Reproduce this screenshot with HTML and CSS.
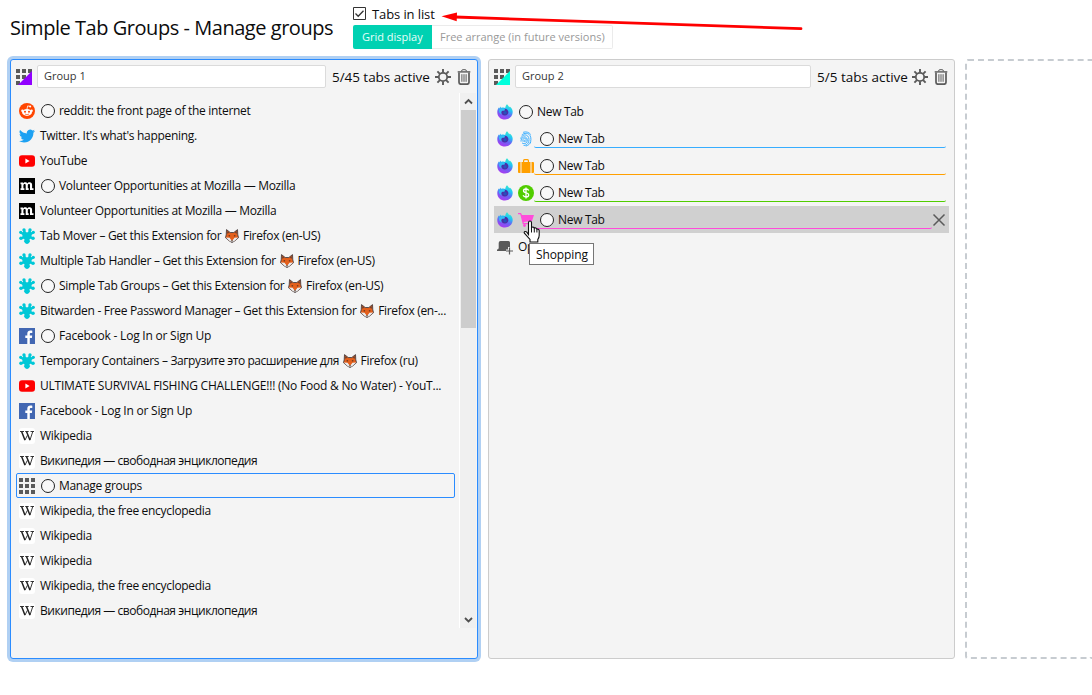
FILE: index.html
```html
<!DOCTYPE html>
<html lang="en">
<head>
<meta charset="utf-8">
<title>Simple Tab Groups - Manage groups</title>
<link rel="stylesheet" href="styles.css">
</head>
<body>
<svg class="sprite" width="0" height="0">
  <defs>
    <linearGradient id="ff-body" x1="0.8" y1="0" x2="0.4" y2="1"><stop offset="0" stop-color="#3ff0c8"/><stop offset=".35" stop-color="#20c5f5"/><stop offset=".65" stop-color="#6a62f5"/><stop offset="1" stop-color="#a83cf0"/></linearGradient>
    <symbol id="reddit" viewBox="0 0 16 16"><circle cx="8" cy="8" r="8" fill="#ff4500"/><ellipse cx="8" cy="9.4" rx="4.9" ry="3.5" fill="#fff"/><circle cx="3.4" cy="7.8" r="1.2" fill="#fff"/><circle cx="12.6" cy="7.8" r="1.2" fill="#fff"/><path d="M8 6l.7-3.1 2.3.5" fill="none" stroke="#fff" stroke-width=".8"/><circle cx="11.2" cy="3.5" r="1" fill="#fff"/><circle cx="6" cy="8.7" r="1" fill="#ff4500"/><circle cx="10" cy="8.7" r="1" fill="#ff4500"/><path d="M5.9 11q2.1 1.5 4.2 0" fill="none" stroke="#ff4500" stroke-width=".7"/></symbol>
    <symbol id="twitter" viewBox="0 0 24 24"><path fill="#1da1f2" d="M23.95 4.57a10 10 0 01-2.82.77 4.96 4.96 0 002.16-2.72c-.95.55-2 .95-3.13 1.18a4.92 4.92 0 00-8.38 4.48C7.69 8.1 4.07 6.13 1.64 3.16a4.82 4.82 0 001.52 6.57 4.9 4.9 0 01-2.23-.61v.06a4.92 4.92 0 003.95 4.83 4.99 4.99 0 01-2.21.08 4.94 4.94 0 004.6 3.42A9.87 9.87 0 010 19.54a13.99 13.99 0 007.56 2.21c9.05 0 14-7.5 14-13.98 0-.21 0-.42-.02-.63a9.94 9.94 0 002.46-2.55z"/></symbol>
    <symbol id="youtube" viewBox="0 0 16 16"><rect y="2.3" width="16" height="11.4" rx="3" fill="#f00"/><path d="M6.4 5.6v4.8L10.6 8z" fill="#fff"/></symbol>
    <symbol id="mozilla" viewBox="0 0 16 16"><path d="M0 0h16v16H0z"/><path fill="#fff" d="M1.5 4.5H4v1.1c.5-.8 1.2-1.3 2.2-1.3s1.800.4 2.1 1.300c.5-.8 1.200-1.300 2.300-1.300 1.700 0 2.500 1 2.500 2.700v3.300h1.400V12H11V7.500c0-.9-.3-1.400-1-1.400-.8 0-1.200.6-1.200 1.500v2.700h.9V12H6.700V7.500c0-.9-.3-1.400-1-1.400-.8 0-1.300.6-1.300 1.500v2.700h1V12H1.500v-1.700h.9V6.200h-.9z"/></symbol>
    <symbol id="addon" viewBox="0 0 16 16"><g fill="#00c8d7"><circle cx="5" cy="2" r="1.700"/><circle cx="11" cy="2" r="1.700"/><circle cx="1.700" cy="4.300" r="1.600"/><circle cx="14.300" cy="4.300" r="1.600"/><circle cx="1.900" cy="10.300" r="1.700"/><circle cx="14.100" cy="10.300" r="1.700"/><path d="M4.500 2.500h1.800L7 4.200h2l.7-1.700h1.800l.6 1.800 2.100-.6.300 1.900-1.900 1.300v1.500l1.700 1.200-.8 1.900-2.400-.8-.8 1.300.9 1.100-1.200 1.800h-4L4.800 13.100l.9-1.100-.8-1.300-2.400.8-.8-1.900 1.700-1.200V6.900L1.500 5.600l.3-1.900 2.100.6z"/><circle cx="8" cy="14" r="2"/></g></symbol>
    <symbol id="facebook" viewBox="0 0 16 16"><path fill="#4267b2" d="M0 0h16v16H0z"/><path fill="#fff" d="M8.300 16V9.900H6.300V7.500h2V5.800c0-2.100 1.300-3.200 3.100-3.200.9 0 1.600.1 1.900.1v2.200H12c-1 0-1.200.5-1.200 1.200v1.400h2.400l-.3 2.400h-2.100V16z"/></symbol>
    <symbol id="grid" viewBox="0 0 16 16"><path fill="#5a5a5a" d="M0 0h4v4H0zM6 0h4v4H6zM12 0h4v4h-4zM0 6h4v4H0zM6 6h4v4H6zM12 6h4v4h-4zM0 12h4v4H0zM6 12h4v4H6zM12 12h4v4h-4z"/></symbol>
    <symbol id="wikipedia" viewBox="0 0 16 16"><rect width="16" height="16" rx="3" fill="#fff"/><g fill="none" stroke="#222"><path d="M1 3.500h4M6.200 3.500h3.500M11.500 3.500h3.500" stroke-width=".9"/><path d="M2.600 3.500l3.300 8.500M7.500 3.500l3.400 8.500" stroke-width="1.500"/><path d="M5.900 12.300l2.500-5M10.900 12.300l2.900-8.800" stroke-width=".9"/></g></symbol>
    <symbol id="fox" viewBox="0 0 14 14"><path fill="#e4601c" stroke="#33343b" stroke-width=".8" d="M1.500.6l3.700 2.900h3.600L12.500.6l.3 5.200.7 2.900L10 11.700 7 13.600 4 11.700.5 8.700l.7-2.900z"/><path d="M.8 8.500l3.700.2L7 12l2.500-3.300 3.700-.2-3.500 3.200L7 13.300l-2.700-1.600z" fill="#e9edf0"/><path d="M3.700 6l1.700 1-1.500.5zM10.300 6L8.600 7l1.500.5zM6 11.500h2l-1 1.400z" fill="#222"/><path d="M2.300 2l1.800 1.800-1.800 1zM11.700 2L9.900 3.800l1.800 1z" fill="#563b35"/></symbol>
    <symbol id="firefox" viewBox="0 0 16 16"><path fill="url(#ff-body)" d="M10 .3c1.200 1 1.500 2.200 2.300 2.900l.5-.7c2 1.500 2.900 3.500 2.900 5.600 0 4.300-3.400 7.500-7.700 7.500S.3 12.500.3 8.200c0-2 .6-3.700 1.800-5l.5 1.300 1.200-2 .6 1.400c1.500-.6 2.900-.4 3.800.2C8.500 2.800 8.800 1.200 10 .3z"/><path fill="#2dc6f4" d="M2 6c1-1.500 3-2.200 5-1l1.200 1.700L5 7.500l-.4 3C3 9.500 1.500 8 2 6z" opacity=".8"/><path fill="#4c2da8" d="M5 7.100c1-.5 2.200-.4 3-.9.2-.6-.3-1.100-.8-1.400 2.400-.3 4.200 1.300 4.200 3.500a3.600 3.600 0 01-7.100.3c0-.6.200-1.200.7-1.500z"/><circle cx="8.100" cy="8.700" r="1.700" fill="#2850bc"/></symbol>
    <symbol id="fingerprint" viewBox="0 0 16 16"><g fill="none" stroke="#37adff" stroke-width=".95" stroke-linecap="round"><path d="M4 3.800c2.400-2.300 6.300-1.900 8 .7 1.300 2 1.200 5.500.1 7.500M2.800 7.300C4 3.700 7.500 3 9.700 5c1.800 1.700 1.600 5.300.3 7.200-1 1.500-2.500 2.300-4 2.300M3 10.200C2.800 6.700 6.500 4.300 8.700 7c1.200 1.700.6 4-.8 5.100-1 .8-2.500.8-3.500.1M5 10.400c-.7-2 .8-3.900 2.300-3 1.400.9.8 3.400-.8 3.200-.7-.2-.6-1.200.1-1.500M5.500 1.200c2.500-1 5.500.1 7 2M8.200 15c2.200-.6 3.700-2 4.500-3.800"/></g></symbol>
    <symbol id="briefcase" viewBox="0 0 16 16"><path fill="#ff9f00" d="M5 4V2.500Q5 1 6.500 1h3Q11 1 11 2.500V4h1.500v11h-9V4zm1.200 0h3.600V2.700q0-.5-.5-.5H6.700q-.5 0-.5.500zM0 5q0-1 1-1h1.500v11H1q-1 0-1-1zM13.500 4H15q1 0 1 1v9q0 1-1 1h-1.500z"/></symbol>
    <symbol id="dollar" viewBox="0 0 16 16"><circle cx="8" cy="8" r="8" fill="#51cd00"/><path d="M10.800 5.500Q10 4 8 4 5.500 4 5.500 5.800 5.500 7.400 8 7.800q2.700.5 2.700 2.300Q10.700 12 8 12q-2.200 0-2.900-1.700M8 2.500v11" fill="none" stroke="#fff" stroke-width="1.300"/></symbol>
    <symbol id="cart" viewBox="0 0 16 16"><path fill="#ff4bda" d="M0 1h3l1 2h12l-2 6-8.500 1 .5 1h8v1.300H4.800L2.300 2.300H0z"/><circle cx="6.500" cy="13.500" r="1.400" fill="#ff4bda"/><circle cx="12.500" cy="13.500" r="1.400" fill="#ff4bda"/></symbol>
    <symbol id="newtab" viewBox="0 0 16 16"><path fill="#5a5a5a" d="M3.500 2h8q1.500 0 1.500 1.500V8h-2v2.500H9V12H0v-1.500q1.500 0 1.700-1.500V4q0-2 1.800-2z"/><path d="M12.500 8.500v7M9 12h7" stroke="#5a5a5a" stroke-width="1.200"/></symbol>
    <symbol id="gear" viewBox="0 0 16 16"><g fill="none" stroke="#5a5a5a"><circle cx="8" cy="8" r="4.200" stroke-width="1.800"/><path d="M8 0v3.500M8 12.500V16M0 8h3.500M12.500 8H16M2.400 2.400l2.500 2.500M11.100 11.100l2.500 2.500M13.600 2.400l-2.500 2.500M4.900 11.100l-2.500 2.500" stroke-width="1.900"/></g></symbol>
    <symbol id="trash" viewBox="0 0 16 16"><g fill="none" stroke="#5a5a5a"><path d="M5.500 2.300Q5.500.7 7 .7h2q1.500 0 1.500 1.600" stroke-width="1"/><path d="M1.700 2.900h12.600" stroke-width="1.400"/><path d="M3 3.500v9.700Q3 15.200 5 15.200h6q2 0 2-2V3.500" stroke-width="1.700"/><path d="M5.900 5.200v7.600M8 5.200v7.600M10.100 5.200v7.600" stroke-width="1"/></g></symbol>
  </defs>
</svg>

<header class="header">
  <h1 class="title">Simple Tab Groups - Manage groups</h1>
  <div class="options">
    <label class="check"><svg class="checkbox" viewBox="0 0 13 13"><path d="M.5.500h12v12H.5z" fill="#fff" stroke="#333"/><path d="M2.500 6.500l2.700 2.700 5.300-5.500" fill="none" stroke="#333" stroke-width="1.300"/></svg><span>Tabs in list</span></label>
    <div class="modes"><span class="mode active">Grid display</span><span class="mode">Free arrange (in future versions)</span></div>
  </div>
</header>

<main class="groups">
  <section class="group current">
    <div class="group-head">
      <svg class="icon" viewBox="0 0 16 16"><use href="#grid"/><path d="M16 2v14H2z" fill="#9000ff"/></svg>
      <div class="name">Group 1</div><span class="count c45">5/45 tabs active</span>
      <svg class="icon gear"><use href="#gear"/></svg><svg class="icon trash"><use href="#trash"/></svg>
    </div>
    <div class="scroller">
      <ul class="tabs">
        <li class="tab"><svg class="icon"><use href="#reddit"/></svg><i class="ring"></i><span>reddit: the front page of the internet</span></li>
        <li class="tab"><svg class="icon"><use href="#twitter"/></svg><span>Twitter. It's what's happening.</span></li>
        <li class="tab"><svg class="icon"><use href="#youtube"/></svg><span>YouTube</span></li>
        <li class="tab"><svg class="icon"><use href="#mozilla"/></svg><i class="ring"></i><span>Volunteer Opportunities at Mozilla — Mozilla</span></li>
        <li class="tab"><svg class="icon"><use href="#mozilla"/></svg><span>Volunteer Opportunities at Mozilla — Mozilla</span></li>
        <li class="tab"><svg class="icon"><use href="#addon"/></svg><span>Tab Mover – Get this Extension for <svg class="fox"><use href="#fox"/></svg> Firefox (en-US)</span></li>
        <li class="tab"><svg class="icon"><use href="#addon"/></svg><span>Multiple Tab Handler – Get this Extension for <svg class="fox"><use href="#fox"/></svg> Firefox (en-US)</span></li>
        <li class="tab"><svg class="icon"><use href="#addon"/></svg><i class="ring"></i><span>Simple Tab Groups – Get this Extension for <svg class="fox"><use href="#fox"/></svg> Firefox (en-US)</span></li>
        <li class="tab"><svg class="icon"><use href="#addon"/></svg><span>Bitwarden - Free Password Manager – Get this Extension for <svg class="fox"><use href="#fox"/></svg> Firefox (en-...</span></li>
        <li class="tab"><svg class="icon"><use href="#facebook"/></svg><i class="ring"></i><span class="loose">Facebook - Log In or Sign Up</span></li>
        <li class="tab"><svg class="icon"><use href="#addon"/></svg><span>Temporary Containers – <span class="cyr">Загрузите это расширение для</span> <svg class="fox"><use href="#fox"/></svg> Firefox (ru)</span></li>
        <li class="tab"><svg class="icon"><use href="#youtube"/></svg><span class="loose">ULTIMATE SURVIVAL FISHING CHALLENGE!!! (No Food &amp; No Water) - YouT...</span></li>
        <li class="tab"><svg class="icon"><use href="#facebook"/></svg><span class="loose">Facebook - Log In or Sign Up</span></li>
        <li class="tab"><svg class="icon"><use href="#wikipedia"/></svg><span>Wikipedia</span></li>
        <li class="tab"><svg class="icon"><use href="#wikipedia"/></svg><span class="cyr">Википедия — свободная энциклопедия</span></li>
        <li class="tab selected"><svg class="icon"><use href="#grid"/></svg><i class="ring"></i><span>Manage groups</span></li>
        <li class="tab"><svg class="icon"><use href="#wikipedia"/></svg><span>Wikipedia, the free encyclopedia</span></li>
        <li class="tab"><svg class="icon"><use href="#wikipedia"/></svg><span>Wikipedia</span></li>
        <li class="tab"><svg class="icon"><use href="#wikipedia"/></svg><span>Wikipedia</span></li>
        <li class="tab"><svg class="icon"><use href="#wikipedia"/></svg><span>Wikipedia, the free encyclopedia</span></li>
        <li class="tab"><svg class="icon"><use href="#wikipedia"/></svg><span class="cyr">Википедия — свободная энциклопедия</span></li>
      </ul>
      <div class="scrollbar">
        <svg class="chevron" viewBox="0 0 15 17"><path d="M4 10.500L7.500 7l3.500 3.500" fill="none" stroke="#505050" stroke-width="1.800"/></svg>
        <div class="thumb"></div>
        <svg class="chevron" viewBox="0 0 15 17"><path d="M4 7l3.500 3.500L11 7" fill="none" stroke="#505050" stroke-width="1.800"/></svg>
      </div>
    </div>
  </section>

  <section class="group">
    <div class="group-head">
      <svg class="icon" viewBox="0 0 16 16"><use href="#grid"/><path d="M16 2v14H2z" fill="#00ffdc"/></svg>
      <div class="name">Group 2</div><span class="count c5">5/5 tabs active</span>
      <svg class="icon gear"><use href="#gear"/></svg><svg class="icon trash"><use href="#trash"/></svg>
    </div>
    <ul class="tabs tall">
      <li class="tab"><svg class="icon"><use href="#firefox"/></svg><i class="ring"></i><span>New Tab</span></li>
      <li class="tab"><svg class="icon"><use href="#firefox"/></svg><svg class="icon"><use href="#fingerprint"/></svg><div class="line blue"><i class="ring"></i><span>New Tab</span></div></li>
      <li class="tab"><svg class="icon"><use href="#firefox"/></svg><svg class="icon"><use href="#briefcase"/></svg><div class="line orange"><i class="ring"></i><span>New Tab</span></div></li>
      <li class="tab"><svg class="icon"><use href="#firefox"/></svg><svg class="icon"><use href="#dollar"/></svg><div class="line green"><i class="ring"></i><span>New Tab</span></div></li>
      <li class="tab hover"><svg class="icon"><use href="#firefox"/></svg><svg class="icon"><use href="#cart"/></svg><div class="line pink"><i class="ring"></i><span>New Tab</span></div><svg class="close" viewBox="0 0 14 14"><path d="M1.500 1.500l11 11M12.500 1.500l-11 11" stroke="#5a5a5a" stroke-width="1.500"/></svg></li>
      <li class="tab"><svg class="icon"><use href="#newtab"/></svg><span class="open">Op</span></li>
    </ul>
  </section>
  <section class="new-group"></section>
</main>

<div class="tooltip">Shopping</div>
<svg class="cursor" viewBox="0 0 18 24"><path d="M5.500 14.500V2.600Q5.600 1 7 1t1.500 1.600v5.200q.6-1 1.700-.7 1 .2 1.100 1.100.8-.6 1.700-.2.900.3.900 1.300 1.200-.4 1.900.4.400.5.400 1.300v4.200q0 2.300-1.400 4.300V22H7v-2.500L1.400 13.200Q.8 12 1.900 11.500q1-.3 1.900.7z" fill="#fff" stroke="#111" stroke-width="1.100"/><path d="M8.500 8v4.500M11.300 8.500v4M13.900 9.500v3" stroke="#111" stroke-width="1"/></svg>
<svg class="arrow" viewBox="0 0 370 24"><path d="M15 7L361 18.700" stroke="#f00" stroke-width="2.800" stroke-linecap="round"/><path d="M1.500 6.300L17 2.500l-.3 8.700z" fill="#f00"/></svg>
</body>
</html>
```
FILE: styles.css
```css
* { box-sizing: border-box; }
body { margin: 0; height: 695px; overflow: hidden; position: relative; background: #fff; color: #0c0c0d; font-family: "Open Sans", "Noto Sans", sans-serif; font-size: 12px; }
svg { display: block; flex: none; }
.sprite { position: absolute; }
.header { display: flex; height: 59px; padding: 7px 0 0 10px; }
.title { margin: 5px 0 0; width: 343px; font-size: 20px; line-height: 32px; font-weight: 400; letter-spacing: -.46px; white-space: nowrap; }
.check { display: flex; height: 18px; line-height: 15px; gap: 6px; font-size: 13px; letter-spacing: -.1px; }
.checkbox { width: 13px; height: 13px; }
.modes { display: flex; height: 24px; font-size: 11px; line-height: 23px; }
.mode { width: 181px; padding-left: 8px; border: 1px solid #ebebeb; border-left: 0; border-radius: 0 2px 2px 0; color: #999; white-space: nowrap; line-height: 22px; }
.mode.active { width: 79px; padding-left: 9px; border: 0; border-radius: 2px 0 0 2px; background: #00d1b2; color: #e8fffa; line-height: 24px; }
.groups { display: flex; height: 600px; padding-left: 10px; gap: 10px; }
.group { display: flex; flex: none; flex-direction: column; width: 467px; border: 1px solid #ccc; border-radius: 3px; background: #f4f4f4; }
.group.current { width: 468px; border-color: #2b8cff; box-shadow: 0 0 0 3px #b0d0f3; }
.new-group { flex: 1; border: 2px dashed #c7ccd1; border-right: 0; border-radius: 3px 0 0 3px; }
.group-head { display: flex; align-items: center; height: 33px; padding: 0 5px; }
.icon { width: 16px; height: 16px; }
.name { flex: 1; height: 23px; margin: 0 6px 0 5px; padding-left: 6px; border: 1px solid #dbdbdb; border-radius: 2px; background: #fff; color: #363636; font-size: 11px; line-height: 20px; }
.count { font-size: 13.5px; white-space: nowrap; }
.c45 { width: 98px; letter-spacing: -.05px; }
.c5 { width: 90px; }
.gear { margin-left: 5px; }
.trash { margin-left: 5px; }
.scroller { display: flex; height: 535px; padding-left: 5px; }
.tabs { flex: none; list-style: none; margin: 0; padding: 5px 0 0; width: 439px; letter-spacing: -.31px; }
.loose { letter-spacing: -.22px; }
.cyr { letter-spacing: -.44px; }
.tab { display: flex; align-items: center; height: 25px; padding-left: 3px; gap: 5px; white-space: nowrap; line-height: 16px; }
.tab.selected { padding-left: 2px; border: 1px solid #2b8cff; border-radius: 2px; }
.fox { display: inline-block; width: 14px; height: 14px; margin: 0 1px; vertical-align: -3px; }
.ring { flex: none; width: 14px; height: 14px; margin: 0 -1px 0 1px; border: 1px solid #222; border-radius: 50%; background: #f8f8f8; }
.scrollbar { display: flex; flex-direction: column; margin-left: 4px; width: 17px; padding-left: 1px; border-left: 1px solid #fff; background: #f0f0f0; }
.chevron { width: 15px; height: 17px; }
.thumb { height: 218px; margin-bottom: 283px; background: #cdcdcd; }
.tall { width: auto; padding: 5px 5px 0; }
.tall .tab { height: 27px; }
.tall .tab.hover { background: #d0d0d0; }
.line { display: flex; align-items: center; align-self: flex-start; flex: 1; gap: 5px; height: 23px; margin: 0 3px 0 -5px; padding: 6px 0 0 5px; border-bottom: 1px solid; border-radius: 2px; }
.line.blue { border-color: #37adff; }
.line.orange { border-color: #ff9f00; }
.line.green { border-color: #51cd00; }
.line.pink { border-color: #ff4bda; margin-right: -5px; }
.close { width: 14px; height: 14px; margin-right: 3px; }
.tooltip { position: absolute; left: 529px; top: 243px; width: 65px; height: 22px; padding-left: 6px; border: 1px solid #767676; background: #fff; line-height: 21px; letter-spacing: -.1px; }
.cursor { position: absolute; left: 523px; top: 220px; width: 18px; height: 24px; }
.arrow { position: absolute; left: 440px; top: 10px; width: 370px; height: 24px; }
```
